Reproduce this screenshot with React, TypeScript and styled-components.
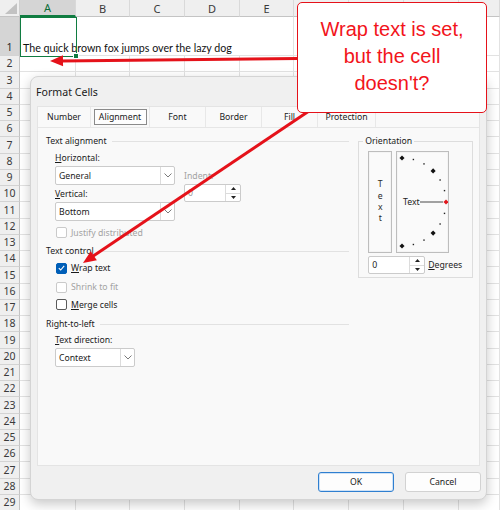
import React from 'react';
import styled, { createGlobalStyle, css } from 'styled-components';

const GlobalStyle = createGlobalStyle`
	html, body {
		margin: 0;
		padding: 0;
		background: #ffffff;
	}
	body {
		font-family: "Noto Sans", "Open Sans", sans-serif;
		color: #1b1b1b;
	}
`;

const COLS = ['A', 'B', 'C', 'D', 'E', 'F', 'G', 'H', 'I'];
const ROW_COUNT = 29;
const SAMPLE = 'The quick brown fox jumps over the lazy dog';

const Page = styled.div`
	position: relative;
	width: 500px;
	height: 510px;
	overflow: hidden;
	background: #ffffff;
`;

/* ---------- worksheet ---------- */

const Sheet = styled.div`
	width: 500px;
	display: grid;
	grid-template-columns: 20px 56px 54px 55px 55px 54px repeat(3, 55px) minmax(0, 1fr);
	grid-template-rows: 17px 39px repeat(${ROW_COUNT - 1}, 16.25px);
`;

const headerBase = css`
	box-sizing: border-box;
	display: flex;
	align-items: center;
	justify-content: center;
	overflow: hidden;
	background: #efefef;
	color: #3a3a3a;
	font-size: 11px;
`;

const Corner = styled.div`
	${headerBase};
	position: relative;
	border-right: 1px solid #cfcfcf;
	border-bottom: 1px solid #c4c4c4;

	&::after {
		content: '';
		position: absolute;
		right: 2px;
		bottom: 2px;
		width: 12px;
		height: 11px;
		background: #c2c2c2;
		clip-path: polygon(100% 0, 100% 100%, 0 100%);
	}
`;

const ColHead = styled.div<{ $active?: boolean }>`
	${headerBase};
	border-right: 1px solid #d9d9d9;
	border-bottom: 1px solid #c4c4c4;
	${(p) =>
		p.$active &&
		css`
			background: #d5d5d5;
			color: #0e6d38;
			border-bottom: 2px solid #107c41;
		`}
`;

const RowHead = styled.div<{ $active?: boolean }>`
	${headerBase};
	align-items: flex-end;
	padding-bottom: 1px;
	border-right: 1px solid #c4c4c4;
	border-bottom: 1px solid #d3d3d3;
	font-size: 10.5px;
	${(p) =>
		p.$active &&
		css`
			background: #d5d5d5;
			color: #2a2a2a;
		`}
`;

const Cell = styled.div<{ $open?: boolean }>`
	box-sizing: border-box;
	border-bottom: 1px solid #e2e2e2;
	border-right: ${(p) => (p.$open ? 'none' : '1px solid #e2e2e2')};
`;

const ActiveCell = styled.div`
	position: relative;
	z-index: 1;
	display: flex;
	align-items: flex-end;
	padding: 0 0 2px 3px;
	white-space: nowrap;
	font-family: Lato, "Noto Sans", sans-serif;
	font-size: 10.7px;
	color: #111;

	&::before {
		content: '';
		position: absolute;
		inset: 0 -1px -1px 0;
		border: 1.5px solid #107c41;
		pointer-events: none;
	}

	&::after {
		content: '';
		position: absolute;
		right: -3px;
		bottom: -3px;
		width: 4px;
		height: 4px;
		background: #107c41;
		border: 1px solid #fff;
	}
`;

/* ---------- dialog ---------- */

const Dialog = styled.div`
	position: absolute;
	left: 30px;
	top: 76px;
	width: 457px;
	height: 424px;
	box-sizing: border-box;
	display: flex;
	flex-direction: column;
	background: #f0f0f0;
	border: 1px solid #d4d4d4;
	border-radius: 8px;
	box-shadow: 0 4px 12px rgba(0, 0, 0, 0.22);
	font-size: 8.7px;
`;

const TitleBar = styled.div`
	height: 29px;
	display: flex;
	align-items: center;
	padding-left: 5px;
	font-size: 10.6px;
	color: #1a1a1a;
`;

const TabPanel = styled.div`
	box-sizing: border-box;
	height: 360px;
	margin: 0 6px;
	display: flex;
	flex-direction: column;
	background: #f9f9f9;
	border: 1px solid #e4e4e4;
`;

const TabBar = styled.div`
	display: flex;
	height: 21px;
	box-sizing: border-box;
	border-bottom: 1px solid #e6e6e6;
`;

const Tab = styled.div<{ $w: number }>`
	width: ${(p) => p.$w}px;
	display: flex;
	align-items: center;
	justify-content: center;
	border-right: 1px solid #e8e8e8;
	color: #1b1b1b;
`;

const TabLabel = styled.span<{ $active?: boolean }>`
	display: flex;
	align-items: center;
	justify-content: center;
	height: 16px;
	padding: 0 5px;
	${(p) =>
		p.$active &&
		css`
			width: 53px;
			padding: 0;
			box-sizing: border-box;
			border: 1px solid #8a8a8a;
			background: #fdfdfd;
		`}
`;

const TabBody = styled.div`
	display: flex;
	gap: 9px;
	padding: 6px 6px 0 8px;
`;

const LeftCol = styled.div`
	width: 304px;
	display: flex;
	flex-direction: column;
`;

const SectionHead = styled.div<{ $gap?: number }>`
	display: flex;
	align-items: center;
	gap: 5px;
	height: 14px;
	margin-top: ${(p) => p.$gap ?? 0}px;
	color: #1b1b1b;

	&::after {
		content: '';
		flex: 1;
		border-top: 1px solid #e2e2e2;
	}
`;

const Indented = styled.div`
	padding-left: 9px;
	display: flex;
	flex-direction: column;
`;

const AlignRow = styled.div`
	display: flex;
	gap: 9px;
	margin-top: 1px;
`;

const FieldColumn = styled.div`
	display: flex;
	flex-direction: column;
`;

const FieldLabel = styled.div<{ $muted?: boolean }>`
	display: flex;
	align-items: center;
	height: 17px;
	color: ${(p) => (p.$muted ? '#a3a3a3' : '#1b1b1b')};
`;

const IndentBox = styled.div`
	display: flex;
	flex-direction: column;
	padding-top: 18px;
`;

const Key = styled.span`
	text-decoration: underline;
	text-underline-offset: 1px;
`;

const SelectBox = styled.div<{ $w: number }>`
	box-sizing: border-box;
	width: ${(p) => p.$w}px;
	height: 19px;
	display: flex;
	background: #ffffff;
	border: 1px solid #cbcbcb;
	border-radius: 2px;
`;

const SelectValue = styled.div`
	flex: 1;
	display: flex;
	align-items: center;
	padding-left: 3px;
`;

const SelectCaret = styled.div`
	width: 13px;
	display: flex;
	align-items: center;
	justify-content: center;
	border-left: 1px solid #dcdcdc;
`;

const SpinBox = styled.div<{ $w: number; $muted?: boolean }>`
	box-sizing: border-box;
	width: ${(p) => p.$w}px;
	height: 18px;
	display: flex;
	background: #ffffff;
	border: 1px solid #cbcbcb;
	border-radius: 2px;
	color: ${(p) => (p.$muted ? '#9a9a9a' : '#1b1b1b')};
`;

const SpinButtons = styled.div`
	width: 14px;
	display: flex;
	flex-direction: column;
	border-left: 1px solid #dcdcdc;
`;

const SpinHalf = styled.div<{ $top?: boolean }>`
	flex: 1;
	display: flex;
	align-items: center;
	justify-content: center;
	border-bottom: ${(p) => (p.$top ? '1px solid #dcdcdc' : 'none')};
`;

const CheckRow = styled.div<{ $muted?: boolean; $h?: number; $gap?: number }>`
	display: flex;
	align-items: center;
	gap: 4px;
	height: ${(p) => p.$h ?? 17}px;
	margin-top: ${(p) => p.$gap ?? 0}px;
	padding-left: 1px;
	color: ${(p) => (p.$muted ? '#a3a3a3' : '#1b1b1b')};
`;

const CheckBox = styled.div<{ $checked?: boolean; $muted?: boolean }>`
	box-sizing: border-box;
	width: 11px;
	height: 11px;
	display: flex;
	align-items: center;
	justify-content: center;
	border-radius: 2px;
	border: 1px solid ${(p) => (p.$checked ? '#005fb8' : p.$muted ? '#cacaca' : '#5a5a5a')};
	background: ${(p) => (p.$checked ? '#005fb8' : '#ffffff')};
`;

/* orientation group */

const OrientGroup = styled.fieldset`
	box-sizing: border-box;
	width: 115px;
	height: 144px;
	margin: 0;
	padding: 3px 0 0 9px;
	border: 1px solid #dddddd;
	min-width: 0;
`;

const OrientLegend = styled.legend`
	padding: 0 2px;
	margin-left: -5px;
	line-height: 14px;
	color: #1b1b1b;
`;

const OrientRow = styled.div`
	display: flex;
	gap: 4px;
`;

const FrameBox = styled.div<{ $w: number }>`
	box-sizing: border-box;
	width: ${(p) => p.$w}px;
	height: 102px;
	border: 1px solid #bdbdbd;
	box-shadow: inset 0 0 0 1px #f4f4f4;
	background: #fafafa;
`;

const StackedText = styled(FrameBox)`
	display: flex;
	flex-direction: column;
	align-items: center;
	justify-content: center;
	line-height: 11.4px;
	color: #2a2a2a;
`;

const DegreesRow = styled.div`
	display: flex;
	align-items: center;
	gap: 3px;
	margin-top: 3px;
`;

/* footer */

const Footer = styled.div`
	flex: 1;
	display: flex;
	align-items: center;
	justify-content: flex-end;
	gap: 11px;
	padding: 0 5px 2px 0;
`;

const Button = styled.button<{ $primary?: boolean }>`
	box-sizing: border-box;
	width: 76px;
	height: 20px;
	padding: 0;
	font: inherit;
	color: #1b1b1b;
	background: #fdfdfd;
	border-radius: 3px;
	border: 1px solid ${(p) => (p.$primary ? '#2f7fd0' : '#d2d2d2')};
	box-shadow: ${(p) => (p.$primary ? 'inset 0 0 0 1px #cfe2f6' : 'none')};
`;

/* annotation */

const Callout = styled.div`
	position: absolute;
	left: 297px;
	top: 2px;
	width: 190px;
	height: 111px;
	box-sizing: border-box;
	display: flex;
	align-items: center;
	justify-content: center;
	padding-bottom: 3px;
	background: #ffffff;
	border: 1.5px solid #e5121a;
	border-radius: 5px;
	color: #f2141b;
	font-family: "Liberation Sans", Arial, sans-serif;
	font-size: 20px;
	line-height: 27px;
	text-align: center;
	z-index: 3;
`;

const ArrowLayer = styled.svg`
	position: absolute;
	left: 0;
	top: 0;
	z-index: 2;
	pointer-events: none;
`;

/* ---------- drawings ---------- */

const Chevron = () => (
	<svg width="8" height="5" viewBox="0 0 8 5">
		<path d="M0.5 0.5 L4 4 L7.5 0.5" fill="none" stroke="#6b6b6b" strokeWidth="0.9" />
	</svg>
);

const Tri = ({ up }: { up?: boolean }) => (
	<svg width="5" height="3" viewBox="0 0 5 3">
		<path d={up ? 'M0 3 L2.5 0 L5 3 Z' : 'M0 0 L5 0 L2.5 3 Z'} fill="#222" />
	</svg>
);

const Tick = () => (
	<svg width="7" height="6" viewBox="0 0 7 6">
		<path d="M0.8 3.1 L2.7 5 L6.2 0.9" fill="none" stroke="#fff" strokeWidth="1.1" />
	</svg>
);

const Dial = () => {
	const cx = 5;
	const cy = 50;
	const r = 44;
	const dots = [];
	for (let a = -90; a <= 90; a += 15) {
		if (a === 0) continue;
		const rad = (a * Math.PI) / 180;
		const x = cx + r * Math.cos(rad);
		const y = cy - r * Math.sin(rad);
		const big = Math.abs(a) === 90 || Math.abs(a) === 45;
		dots.push(
			big ? (
				<rect key={a} x={x - 1.8} y={y - 1.8} width={3.6} height={3.6} fill="#111" transform={`rotate(45 ${x} ${y})`} />
			) : (
				<rect key={a} x={x - 0.7} y={y - 0.7} width={1.4} height={1.4} fill="#222" />
			)
		);
	}
	return (
		<FrameBox $w={53}>
			<svg width="51" height="100" viewBox="0 0 51 100">
				{dots}
				<text x="6" y="53" fontSize="8.7" fill="#222" fontFamily="Noto Sans, sans-serif">
					Text
				</text>
				<line x1="23" y1="50" x2="46" y2="50" stroke="#7a7a7a" strokeWidth="1.4" />
				<rect x="47.2" y="48.2" width="3.6" height="3.6" fill="#e0161c" transform="rotate(45 49 50)" />
			</svg>
		</FrameBox>
	);
};

const Select = ({ w, value }: { w: number; value: string }) => (
	<SelectBox $w={w}>
		<SelectValue>{value}</SelectValue>
		<SelectCaret>
			<Chevron />
		</SelectCaret>
	</SelectBox>
);

const Spin = ({ w, value, muted }: { w: number; value: string; muted?: boolean }) => (
	<SpinBox $w={w} $muted={muted}>
		<SelectValue>{value}</SelectValue>
		<SpinButtons>
			<SpinHalf $top>
				<Tri up />
			</SpinHalf>
			<SpinHalf>
				<Tri />
			</SpinHalf>
		</SpinButtons>
	</SpinBox>
);

const arrowHead = (x1: number, y1: number, x2: number, y2: number, len = 13, half = 5.5) => {
	const dx = x2 - x1;
	const dy = y2 - y1;
	const d = Math.hypot(dx, dy);
	const ux = dx / d;
	const uy = dy / d;
	const bx = x2 - ux * len;
	const by = y2 - uy * len;
	return {
		base: [x2 - ux * (len - 2), y2 - uy * (len - 2)],
		points: `${x2},${y2} ${bx - uy * half},${by + ux * half} ${bx + uy * half},${by - ux * half}`,
	};
};

const Arrow = ({ from, to }: { from: [number, number]; to: [number, number] }) => {
	const h = arrowHead(from[0], from[1], to[0], to[1]);
	return (
		<g>
			<line x1={from[0]} y1={from[1]} x2={h.base[0]} y2={h.base[1]} stroke="#e5121a" strokeWidth="3" />
			<polygon points={h.points} fill="#e5121a" />
		</g>
	);
};

/* ---------- page ---------- */

const Worksheet = () => {
	const cells: React.ReactNode[] = [<Corner key="corner" />];
	COLS.forEach((c, i) =>
		cells.push(
			<ColHead key={`h${c}`} $active={i === 0}>
				{i < 5 ? c : ''}
			</ColHead>
		)
	);
	for (let r = 1; r <= ROW_COUNT; r++) {
		cells.push(
			<RowHead key={`r${r}`} $active={r === 1}>
				{r}
			</RowHead>
		);
		COLS.forEach((c, i) => {
			if (r === 1 && i === 0) {
				cells.push(<ActiveCell key="A1">{SAMPLE}</ActiveCell>);
			} else {
				cells.push(<Cell key={`${c}${r}`} $open={r === 1 && i < 4} />);
			}
		});
	}
	return <Sheet>{cells}</Sheet>;
};

const tabs: { label: string; w: number }[] = [
	{ label: 'Number', w: 52 },
	{ label: 'Alignment', w: 58 },
	{ label: 'Font', w: 55 },
	{ label: 'Border', w: 55 },
	{ label: 'Fill', w: 55 },
	{ label: 'Protection', w: 57 },
];

export default function App() {
	return (
		<Page>
			<GlobalStyle />
			<Worksheet />

			<Dialog>
				<TitleBar>Format Cells</TitleBar>
				<TabPanel>
					<TabBar>
						{tabs.map((t) => (
							<Tab key={t.label} $w={t.w}>
								<TabLabel $active={t.label === 'Alignment'}>{t.label}</TabLabel>
							</Tab>
						))}
					</TabBar>

					<TabBody>
						<LeftCol>
							<SectionHead>Text alignment</SectionHead>
							<Indented>
								<AlignRow>
									<FieldColumn>
										<FieldLabel>
											<span>
												<Key>H</Key>orizontal:
											</span>
										</FieldLabel>
										<Select w={120} value="General" />
										<FieldLabel>
											<span>
												<Key>V</Key>ertical:
											</span>
										</FieldLabel>
										<Select w={120} value="Bottom" />
									</FieldColumn>
									<IndentBox>
										<FieldLabel $muted>Indent:</FieldLabel>
										<Spin w={57} value="0" muted />
									</IndentBox>
								</AlignRow>
								<CheckRow $muted $gap={3}>
									<CheckBox $muted />
									Justify distributed
								</CheckRow>
							</Indented>

							<SectionHead $gap={3}>Text control</SectionHead>
							<Indented>
								<CheckRow $h={20}>
									<CheckBox $checked>
										<Tick />
									</CheckBox>
									<span>
										<Key>W</Key>rap text
									</span>
								</CheckRow>
								<CheckRow $muted $h={18}>
									<CheckBox $muted />
									Shrink to fit
								</CheckRow>
								<CheckRow>
									<CheckBox />
									<span>
										<Key>M</Key>erge cells
									</span>
								</CheckRow>
							</Indented>

							<SectionHead $gap={4}>Right-to-left</SectionHead>
							<Indented>
								<FieldLabel>
									<span>
										<Key>T</Key>ext direction:
									</span>
								</FieldLabel>
								<Select w={80} value="Context" />
							</Indented>
						</LeftCol>

						<OrientGroup>
							<OrientLegend>Orientation</OrientLegend>
							<OrientRow>
								<StackedText $w={24}>
									<span>T</span>
									<span>e</span>
									<span>x</span>
									<span>t</span>
								</StackedText>
								<Dial />
							</OrientRow>
							<DegreesRow>
								<Spin w={57} value="0" />
								<span>
									<Key>D</Key>egrees
								</span>
							</DegreesRow>
						</OrientGroup>
					</TabBody>
				</TabPanel>

				<Footer>
					<Button $primary>OK</Button>
					<Button>Cancel</Button>
				</Footer>
			</Dialog>

			<ArrowLayer width="500" height="510" viewBox="0 0 500 510">
				<Arrow from={[298, 58.5]} to={[50, 61]} />
				<Arrow from={[309, 111]} to={[83, 263]} />
			</ArrowLayer>

			<Callout>
				Wrap text is set,
				<br />
				but the cell
				<br />
				doesn't?
			</Callout>
		</Page>
	);
}
